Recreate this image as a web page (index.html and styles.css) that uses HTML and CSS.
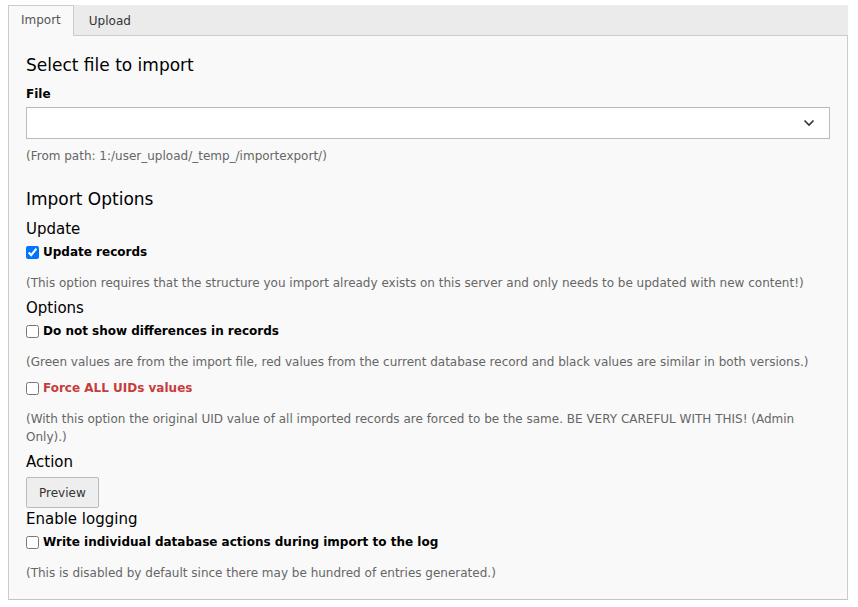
FILE: index.html
```html
<!DOCTYPE html>
<html>
<head>
<meta charset="utf-8">
<link rel="stylesheet" href="styles.css">
</head>
<body>
<div class="tabs">
  <div class="tab active">Import</div>
  <div class="tab">Upload</div>
</div>
<div class="panel">
  <h2 class="title">Select file to import</h2>
  <div class="label">File</div>
  <div class="select">
    <svg class="chev" width="12" height="8" viewBox="0 0 12 8"><path d="M1.5 1.5 L6 6 L10.5 1.5" fill="none" stroke="#333" stroke-width="1.6"/></svg>
  </div>
  <p class="help first">(From path: 1:/user_upload/_temp_/importexport/)</p>

  <h2 class="title options">Import Options</h2>
  <h3 class="sub after-title">Update</h3>
  <label class="check"><input type="checkbox" checked> <span>Update records</span></label>
  <p class="help">(This option requires that the structure you import already exists on this server and only needs to be updated with new content!)</p>

  <h3 class="sub">Options</h3>
  <label class="check"><input type="checkbox"> <span>Do not show differences in records</span></label>
  <p class="help">(Green values are from the import file, red values from the current database record and black values are similar in both versions.)</p>
  <label class="check after-help"><input type="checkbox"> <span class="danger">Force ALL UIDs values</span></label>
  <p class="help">(With this option the original UID value of all imported records are forced to be the same. BE VERY CAREFUL WITH THIS! (Admin Only).)</p>

  <h3 class="sub action">Action</h3>
  <button class="btn">Preview</button>
  <h3 class="sub tight">Enable logging</h3>
  <label class="check after-tight"><input type="checkbox"> <span>Write individual database actions during import to the log</span></label>
  <p class="help last">(This is disabled by default since there may be hundred of entries generated.)</p>
</div>
</body>
</html>
```

FILE: styles.css
```css
html, body {
  background: #fff;
}
body {
  margin: 5px 10px 0 8px;
  font-family: "DejaVu Sans", Verdana, sans-serif;
  font-size: 12px;
  color: #000;
}
.tabs {
  display: flex;
  background: #ebebeb;
  border-bottom: 1px solid #ccc;
  height: 30px;
}
.tab {
  padding: 0 12px;
  line-height: 30px;
  font-size: 12px;
  color: #333;
  margin-bottom: -1px;
  border: 1px solid transparent;
  border-bottom: none;
}
.tab + .tab {
  padding-left: 14px;
}
.tab.active {
  background: #f9f9f9;
  border-color: #ccc;
  color: #555;
  height: 31px;
  box-sizing: border-box;
  line-height: 29px;
}
.panel {
  background: #f9f9f9;
  border: 1px solid #ccc;
  border-top: none;
  border-bottom-color: #c4c4c4;
  box-shadow: 0 1px 0 #e4e4e4;
  padding: 19px 17px 17px 17px;
}
.title {
  margin: 0;
  font-size: 17px;
  font-weight: normal;
  line-height: 20px;
}
.options {
  margin-top: 24px;
}
.label {
  margin-top: 11px;
  font-weight: bold;
  font-size: 12px;
  line-height: 16px;
}
.select {
  margin-top: 5px;
  height: 32px;
  box-sizing: border-box;
  background: #fff;
  border: 1px solid #bbb;
  display: flex;
  align-items: center;
  justify-content: flex-end;
  padding-right: 14px;
}
.help {
  margin: 13px 0 0;
  color: #666;
  font-size: 12px;
  line-height: 18px;
}
.help.first {
  margin-top: 8px;
}
.sub {
  margin: 6px 0 0;
  font-size: 15px;
  font-weight: normal;
  line-height: 20px;
}
.sub.after-title {
  margin-top: 10px;
}
.sub.action {
  margin-top: 6px;
}
.sub.tight {
  margin-top: 1px;
}
.check {
  display: flex;
  align-items: center;
  margin-top: 4px;
  font-weight: bold;
  font-size: 12px;
  line-height: 18px;
}
.check.after-help {
  margin-top: 8px;
}
.check.after-tight {
  margin-top: 4px;
}
.check input {
  margin: 0 4px 0 0;
  width: 13px;
  height: 13px;
}
.danger {
  color: #c83c3c;
}
.btn {
  display: block;
  margin-top: 5px;
  height: 31px;
  padding: 0 12px;
  background: #eee;
  border: 1px solid #bbb;
  border-radius: 2px;
  font-family: inherit;
  font-size: 12px;
  color: #333;
}
```
